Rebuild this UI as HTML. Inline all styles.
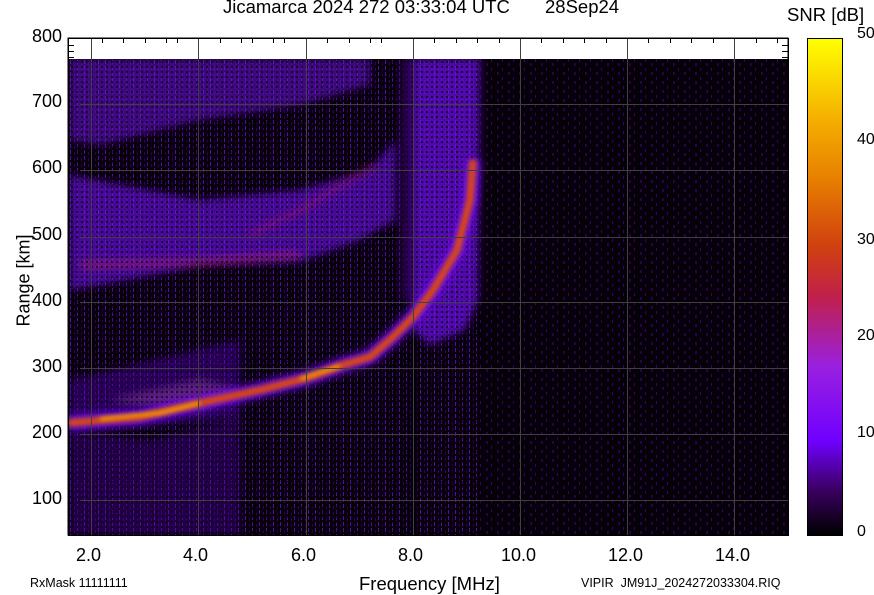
<!DOCTYPE html>
<html><head><meta charset="utf-8"><style>
body{margin:0;width:874px;height:595px;background:#fff;overflow:hidden;font-family:"Liberation Sans",Arial,sans-serif;position:relative}
.t{position:absolute;color:#000;white-space:nowrap}
.yl{font-size:18px;right:812px;text-align:right}
.xl{font-size:18px}
.cl{font-size:16px;left:857px}
</style></head><body>
<div class="t" style="left:223px;top:-4px;font-size:18.5px">Jicamarca 2024 272 03:33:04 UTC</div>
<div class="t" style="left:545px;top:-4px;font-size:18.5px">28Sep24</div>
<div class="t" style="left:787px;top:4px;font-size:18.5px">SNR [dB]</div>
<div class="t yl" style="top:26px">800</div>
<div class="t yl" style="top:91px">700</div>
<div class="t yl" style="top:157px">600</div>
<div class="t yl" style="top:224px">500</div>
<div class="t yl" style="top:290px">400</div>
<div class="t yl" style="top:356px">300</div>
<div class="t yl" style="top:422px">200</div>
<div class="t yl" style="top:488px">100</div>
<div class="t" style="left:-22px;top:270px;font-size:18px;transform:rotate(-90deg);transform-origin:center">Range [km]</div>
<div class="t xl" style="left:76px;top:545px">2.0</div>
<div class="t xl" style="left:183px;top:545px">4.0</div>
<div class="t xl" style="left:291px;top:545px">6.0</div>
<div class="t xl" style="left:398px;top:545px">8.0</div>
<div class="t xl" style="left:501px;top:545px">10.0</div>
<div class="t xl" style="left:608px;top:545px">12.0</div>
<div class="t xl" style="left:715px;top:545px">14.0</div>
<div class="t" style="left:359px;top:573px;font-size:18.5px">Frequency [MHz]</div>
<div class="t" style="left:30px;top:576px;font-size:12.5px">RxMask 11111111</div>
<div class="t" style="left:581px;top:576px;font-size:12.5px">VIPIR&nbsp; JM91J_2024272033304.RIQ</div>
<div class="t cl" style="top:25px">50</div>
<div class="t cl" style="top:131px">40</div>
<div class="t cl" style="top:231px">30</div>
<div class="t cl" style="top:327px">20</div>
<div class="t cl" style="top:424px">10</div>
<div class="t cl" style="top:523px">0</div>
<div style="position:absolute;left:807px;top:38px;width:34px;height:496px;border:1px solid #000;background:linear-gradient(to top,#000 0%,#3a0060 9%,#7000ff 19%,#9a20e0 34%,#c0204a 48%,#d04010 58%,#e88000 72%,#f5b000 84%,#ffff00 100%)"></div>
<svg style="position:absolute;left:0;top:0" width="874" height="595">
<defs>
<filter id="b4"><feGaussianBlur stdDeviation="4"/></filter>
<filter id="b2"><feGaussianBlur stdDeviation="2"/></filter>
<pattern id="vs" width="7" height="6" patternUnits="userSpaceOnUse"><rect x="0" y="0" width="1" height="4" fill="#5010a0"/><rect x="4" y="2" width="1" height="3" fill="#300060"/></pattern>
<pattern id="vs2" width="11" height="9" patternUnits="userSpaceOnUse"><rect x="2" y="0" width="2" height="3" fill="#2a0048"/><rect x="7" y="5" width="1" height="3" fill="#3a0070"/></pattern>
<pattern id="dk" width="5" height="5" patternUnits="userSpaceOnUse"><rect x="1" y="1" width="2" height="2" fill="#10001a"/></pattern>
<clipPath id="c"><rect x="68" y="59" width="720" height="476"/></clipPath>
</defs>
<rect x="68" y="38" width="720" height="497" fill="#fff" stroke="#000"/>
<g clip-path="url(#c)">
<rect x="68" y="59" width="720" height="476" fill="#060008"/>
<rect x="480" y="59" width="308" height="476" fill="url(#vs2)"/>
<rect x="68" y="59" width="412" height="476" fill="url(#vs)"/>
<g filter="url(#b4)" opacity="0.85">
<path d="M70 59 L370 59 L370 85 L300 105 L200 120 L100 145 L70 140Z" fill="#6a10d8" opacity="0.65"/>
<path d="M70 175 L200 200 L300 190 L370 170 L395 140 L395 220 L360 240 L300 262 L200 266 L100 285 L70 290Z" fill="#7010f0" opacity="0.7"/>
<path d="M80 265 L200 262 L300 255" stroke="#b02070" stroke-width="7" fill="none" opacity="0.7"/>
<path d="M250 235 L300 210 L350 180 L375 165" stroke="#b02070" stroke-width="5" fill="none" opacity="0.6"/>
<path d="M70 380 L240 340 L240 420 L70 430Z" fill="#5008b0" opacity="0.55"/>
<path d="M110 400 L200 380 L240 390 L200 410Z" fill="#8030a0" opacity="0.7"/>
<path d="M413 59 L480 59 L478 300 L465 330 L430 345 L413 330Z" fill="#7010f0" opacity="0.8"/>
<path d="M400 59 L412 59 L412 300 L400 300Z" fill="#2a0050"/>
<path d="M70 430 L150 440 L240 420 L240 535 L70 535Z" fill="#4a0aa0" opacity="0.45"/>
</g>
<rect x="68" y="59" width="412" height="476" fill="url(#dk)" opacity="0.7"/>
<path d="M68 423 L140 417 L200 403 L260 390 L307 378 L343 365 L370 357 L393 337 L413 317 L433 290 L457 250 L470 200 L473 160" stroke="#7010f0" stroke-width="14" fill="none" filter="url(#b4)"/>
<path d="M68 423 L140 417 L200 403 L260 390 L307 378 L343 365 L370 357 L393 337 L413 317 L433 290 L457 250 L470 200 L473 160" stroke="#d84a08" stroke-width="7" fill="none" filter="url(#b2)"/>
<path d="M100 419 L160 413 L200 403 M300 379 L340 366" stroke="#f5b000" stroke-width="3" fill="none" filter="url(#b2)"/>
<g stroke="#404040" stroke-width="1">
<line x1="80" y1="104.5" x2="788" y2="104.5"/><line x1="80" y1="170.5" x2="788" y2="170.5"/><line x1="80" y1="237.5" x2="788" y2="237.5"/><line x1="80" y1="302.5" x2="788" y2="302.5"/><line x1="80" y1="368.5" x2="788" y2="368.5"/><line x1="80" y1="434.5" x2="788" y2="434.5"/><line x1="80" y1="500.5" x2="788" y2="500.5"/>
<line x1="91.5" y1="38" x2="91.5" y2="535"/><line x1="198.5" y1="38" x2="198.5" y2="535"/><line x1="306.5" y1="38" x2="306.5" y2="535"/><line x1="413.5" y1="38" x2="413.5" y2="535"/><line x1="520.5" y1="38" x2="520.5" y2="535"/><line x1="627.5" y1="38" x2="627.5" y2="535"/><line x1="734.5" y1="38" x2="734.5" y2="535"/>
</g>
</g>
<g stroke="#404040"><line x1="91.5" y1="38" x2="91.5" y2="59"/><line x1="198.5" y1="38" x2="198.5" y2="59"/><line x1="306.5" y1="38" x2="306.5" y2="59"/><line x1="413.5" y1="38" x2="413.5" y2="59"/><line x1="520.5" y1="38" x2="520.5" y2="59"/><line x1="627.5" y1="38" x2="627.5" y2="59"/><line x1="734.5" y1="38" x2="734.5" y2="59"/></g>
<g stroke="#000">
<line x1="102.5" y1="38" x2="102.5" y2="43"/><line x1="123.5" y1="38" x2="123.5" y2="43"/><line x1="145.5" y1="38" x2="145.5" y2="43"/><line x1="166.5" y1="38" x2="166.5" y2="43"/><line x1="177.5" y1="38" x2="177.5" y2="43"/>
<line x1="220.5" y1="38" x2="220.5" y2="43"/><line x1="241.5" y1="38" x2="241.5" y2="43"/><line x1="252.5" y1="38" x2="252.5" y2="43"/><line x1="273.5" y1="38" x2="273.5" y2="43"/><line x1="284.5" y1="38" x2="284.5" y2="43"/>
<line x1="327.5" y1="38" x2="327.5" y2="43"/><line x1="349.5" y1="38" x2="349.5" y2="43"/><line x1="370.5" y1="38" x2="370.5" y2="43"/><line x1="381.5" y1="38" x2="381.5" y2="43"/>
<line x1="434.5" y1="38" x2="434.5" y2="43"/><line x1="456.5" y1="38" x2="456.5" y2="43"/><line x1="477.5" y1="38" x2="477.5" y2="43"/><line x1="499.5" y1="38" x2="499.5" y2="43"/>
<line x1="541.5" y1="38" x2="541.5" y2="43"/><line x1="563.5" y1="38" x2="563.5" y2="43"/><line x1="584.5" y1="38" x2="584.5" y2="43"/><line x1="606.5" y1="38" x2="606.5" y2="43"/>
<line x1="648.5" y1="38" x2="648.5" y2="43"/><line x1="670.5" y1="38" x2="670.5" y2="43"/><line x1="691.5" y1="38" x2="691.5" y2="43"/><line x1="713.5" y1="38" x2="713.5" y2="43"/>
<line x1="756.5" y1="38" x2="756.5" y2="43"/><line x1="777.5" y1="38" x2="777.5" y2="43"/>
<line x1="68" y1="45.5" x2="74" y2="45.5"/><line x1="68" y1="51.5" x2="74" y2="51.5"/><line x1="68" y1="57.5" x2="74" y2="57.5"/>
<line x1="782" y1="45.5" x2="788" y2="45.5"/><line x1="782" y1="51.5" x2="788" y2="51.5"/><line x1="782" y1="57.5" x2="788" y2="57.5"/>
</g>
<rect x="68.5" y="38.5" width="720" height="497" fill="none" stroke="#000"/>
</svg>
</body></html>
